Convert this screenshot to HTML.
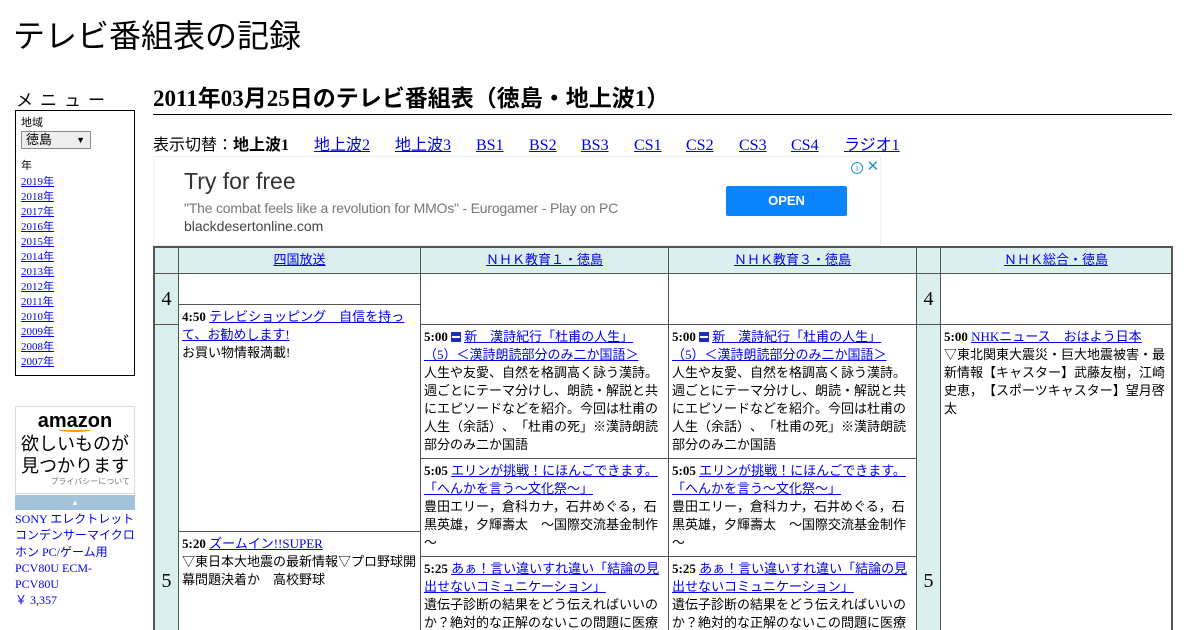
<!DOCTYPE html>
<html><head><meta charset="utf-8">
<style>
*{margin:0;padding:0;box-sizing:border-box}
html,body{width:1200px;height:630px;overflow:hidden}
body{background:#fff;font-family:"Liberation Serif","Noto Sans CJK JP",serif;color:#000;position:relative;text-spacing-trim:space-all}
a{color:#00e}
.abs{position:absolute}
.c{position:absolute;border:1px solid #555;background:#fff;font-size:13px;line-height:18px;padding:3px 3px 0 3px;overflow:hidden}
.o{border-bottom:none}
.h{background:#dcefef;text-align:center;font-size:13px;line-height:24px;padding:0}
.t{background:#dcefef;text-align:center;font-size:20px;padding:0}
b{font-weight:bold}
.ic{display:inline-block;width:10px;height:10px;background:#1a2fbf;vertical-align:-1px;margin-right:3px;position:relative}
.ic:after{content:"";position:absolute;left:1px;right:1px;top:4px;height:2px;background:#fff}
.nav a,.nav span{position:absolute;top:0}
</style></head><body>
<div class="abs" style="left:13px;top:11px;font-size:32px;font-family:'Liberation Sans','Noto Sans CJK JP',sans-serif;">テレビ番組表の記録</div>

<div class="abs" style="left:16px;top:86px;font-size:17px;letter-spacing:7px;font-family:'Liberation Sans','Noto Sans CJK JP',sans-serif;">メニュー</div>
<div class="abs" style="left:15px;top:110px;width:120px;height:266px;border:1px solid #000;font-size:11px;line-height:15px;padding:5px 5px;">
<div>地域</div>
<div style="width:70px;height:18px;border:1px solid #888;background:#eee;font-size:13px;line-height:16px;padding-left:4px;position:relative">徳島<span style="position:absolute;right:5px;top:0;font-size:9px">▼</span></div>
<div style="margin-top:10px">年</div>
<div style="margin-top:1px"><a href="#">2019年</a><br><a href="#">2018年</a><br><a href="#">2017年</a><br><a href="#">2016年</a><br><a href="#">2015年</a><br><a href="#">2014年</a><br><a href="#">2013年</a><br><a href="#">2012年</a><br><a href="#">2011年</a><br><a href="#">2010年</a><br><a href="#">2009年</a><br><a href="#">2008年</a><br><a href="#">2007年</a></div>
</div>

<div class="abs" style="left:15px;top:406px;width:120px;height:88px;border:1px solid #ddd;text-align:center;font-family:'Liberation Sans','Noto Sans CJK JP',sans-serif;">
<div style="font-weight:bold;font-size:20px;line-height:22px;margin-top:3px">amazon</div>
<div style="width:34px;height:5px;border-bottom:2px solid #f90;border-radius:0 0 50% 50%;margin:-5px auto 0"></div>
<div style="font-size:18px;line-height:22px;margin-top:1px">欲しいものが<br>見つかります</div>
<div style="font-size:8px;color:#777;text-align:right;padding-right:4px;line-height:10px">プライバシーについて</div>
</div>
<div class="abs" style="left:15px;top:495px;width:120px;height:15px;background:#a3c3db;color:#fff;text-align:center;font-size:8px;line-height:15px">▲</div>
<div class="abs" style="left:15px;top:511px;width:120px;font-size:12px;line-height:16.3px;color:#00e">SONY エレクトレットコンデンサーマイクロホン PC/ゲーム用 PCV80U ECM-<br>PCV80U<br>￥ 3,357</div>

<div class="abs" style="left:153px;top:79px;font-size:23px;font-weight:bold;">2011年03月25日のテレビ番組表（徳島・地上波1）</div>
<div class="abs" style="left:153px;top:114px;width:1019px;height:1px;background:#000"></div>
<div class="abs nav" style="left:0;top:136px;width:1200px;height:20px;font-size:16px;line-height:20px">
<span style="left:153px">表示切替：<b>地上波1</b></span>
<a href="#" style="left:314px">地上波2</a>
<a href="#" style="left:395px">地上波3</a>
<a href="#" style="left:476px">BS1</a>
<a href="#" style="left:529px">BS2</a>
<a href="#" style="left:581px">BS3</a>
<a href="#" style="left:634px">CS1</a>
<a href="#" style="left:686px">CS2</a>
<a href="#" style="left:739px">CS3</a>
<a href="#" style="left:791px">CS4</a>
<a href="#" style="left:844px">ラジオ1</a>
</div>

<div class="abs" style="left:153px;top:156px;width:728px;height:90px;border:1px solid #eee;font-family:'Liberation Sans',sans-serif;">
<div class="abs" style="left:30px;top:11px;font-size:23px;color:#333">Try for free</div>
<div class="abs" style="left:30px;top:43px;font-size:14px;color:#777;letter-spacing:-0.2px">"The combat feels like a revolution for MMOs" - Eurogamer - Play on PC</div>
<div class="abs" style="left:30px;top:61px;font-size:14px;color:#444">blackdesertonline.com</div>
<div class="abs" style="left:572px;top:29px;width:121px;height:30px;background:#0a84ff;color:#fff;font-size:13px;font-weight:bold;text-align:center;line-height:30px;border-radius:2px">OPEN</div>
<div class="abs" style="left:697px;top:0px;font-size:13px;color:#29b"><span style="display:inline-block;width:12px;height:12px;border:1px solid #29b;border-radius:50%;font-size:9px;line-height:10px;text-align:center">i</span> <span style="font-size:15px">✕</span></div>
</div>

<div class="abs" style="left:153px;top:246px;width:1020px;height:384px;border:1px solid #555;border-bottom:none"></div>
<div class="c h" style="left:154px;top:247px;width:25px;height:27px"></div>
<div class="c h" style="left:178px;top:247px;width:243px;height:27px"><a href="#">四国放送</a></div>
<div class="c h" style="left:420px;top:247px;width:249px;height:27px"><a href="#">ＮＨＫ教育１・徳島</a></div>
<div class="c h" style="left:668px;top:247px;width:249px;height:27px"><a href="#">ＮＨＫ教育３・徳島</a></div>
<div class="c h" style="left:916px;top:247px;width:25px;height:27px"></div>
<div class="c h" style="left:940px;top:247px;width:232px;height:27px"><a href="#">ＮＨＫ総合・徳島</a></div>
<div class="c t" style="left:154px;top:273px;width:25px;height:52px;line-height:50px">4</div>
<div class="c t o" style="left:154px;top:324px;width:25px;height:306px;padding-top:247px">5</div>
<div class="c t" style="left:916px;top:273px;width:25px;height:52px;line-height:50px">4</div>
<div class="c t o" style="left:916px;top:324px;width:25px;height:306px;padding-top:247px">5</div>
<div class="c" style="left:178px;top:273px;width:243px;height:32px"></div>
<div class="c" style="left:178px;top:304px;width:243px;height:228px"><b>4:50</b> <a href="#">テレビショッピング　自信を持って、お勧めします!</a><br>お買い物情報満載!</div>
<div class="c o" style="left:178px;top:531px;width:243px;height:99px"><b>5:20</b> <a href="#">ズームイン!!SUPER</a><br>▽東日本大地震の最新情報▽プロ野球開幕問題決着か　高校野球</div>
<div class="c" style="left:420px;top:273px;width:249px;height:52px"></div>
<div class="c" style="left:668px;top:273px;width:249px;height:52px"></div>
<div class="c" style="left:420px;top:324px;width:249px;height:135px"><b>5:00</b> <span class="ic"></span><a href="#">新　漢詩紀行「杜甫の人生」（5）＜漢詩朗読部分のみ二か国語＞</a><br>人生や友愛、自然を格調高く詠う漢詩。週ごとにテーマ分けし、朗読・解説と共にエピソードなどを紹介。今回は杜甫の人生（余話）、「杜甫の死」※漢詩朗読部分のみ二か国語</div>
<div class="c" style="left:668px;top:324px;width:249px;height:135px"><b>5:00</b> <span class="ic"></span><a href="#">新　漢詩紀行「杜甫の人生」（5）＜漢詩朗読部分のみ二か国語＞</a><br>人生や友愛、自然を格調高く詠う漢詩。週ごとにテーマ分けし、朗読・解説と共にエピソードなどを紹介。今回は杜甫の人生（余話）、「杜甫の死」※漢詩朗読部分のみ二か国語</div>
<div class="c" style="left:420px;top:458px;width:249px;height:99px"><b>5:05</b> <a href="#">エリンが挑戦！にほんごできます。「へんかを言う～文化祭～」</a><br>豊田エリー，倉科カナ，石井めぐる，石黒英雄，夕輝壽太　～国際交流基金制作～</div>
<div class="c" style="left:668px;top:458px;width:249px;height:99px"><b>5:05</b> <a href="#">エリンが挑戦！にほんごできます。「へんかを言う～文化祭～」</a><br>豊田エリー，倉科カナ，石井めぐる，石黒英雄，夕輝壽太　～国際交流基金制作～</div>
<div class="c o" style="left:420px;top:556px;width:249px;height:74px"><b>5:25</b> <a href="#">あぁ！言い違いすれ違い「結論の見出せないコミュニケーション」</a><br>遺伝子診断の結果をどう伝えればいいのか？絶対的な正解のないこの問題に医療</div>
<div class="c o" style="left:668px;top:556px;width:249px;height:74px"><b>5:25</b> <a href="#">あぁ！言い違いすれ違い「結論の見出せないコミュニケーション」</a><br>遺伝子診断の結果をどう伝えればいいのか？絶対的な正解のないこの問題に医療</div>
<div class="c" style="left:940px;top:273px;width:232px;height:52px"></div>
<div class="c o" style="left:940px;top:324px;width:232px;height:306px"><b>5:00</b> <a href="#">NHKニュース　おはよう日本</a><br>▽東北関東大震災・巨大地震被害・最新情報【キャスター】武藤友樹，江崎史恵，【スポーツキャスター】望月啓太</div>
</body></html>
